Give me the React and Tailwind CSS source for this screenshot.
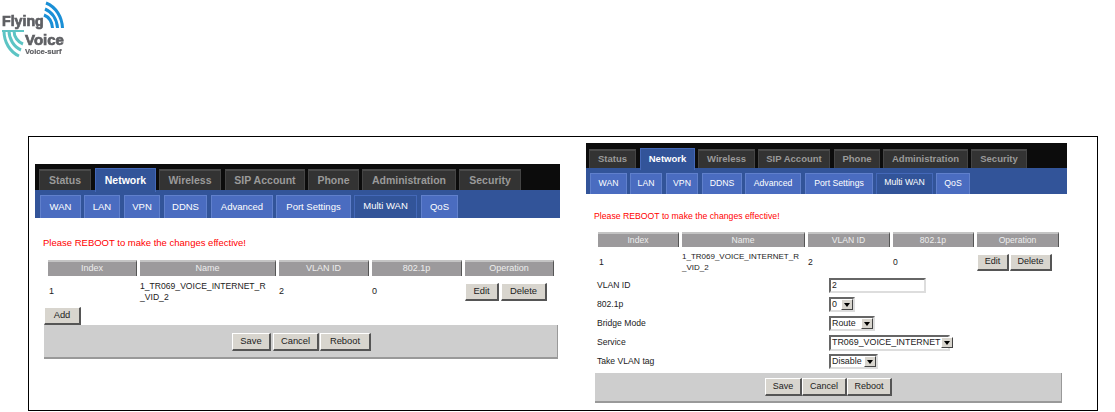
const font = "font-['Liberation_Sans',sans-serif]";

const leftPanel = {
  wrap: "w-[525px] ml-[6px] mt-[27px]",
  bar: "h-[26px] pt-[5px] pl-[4px]",
  tabText: "text-[10.5px]",
  tabH: "h-[21px]",
  activeH: "h-[24px] -mt-[1px]",
  sub: "h-[28px] pt-[5px] pl-[5px]",
  subText: "text-[9.5px]",
  tabs: [
    ["Status", "w-[52px]"],
    ["Network", "w-[61px] ml-[4px]", true],
    ["Wireless", "w-[62px] ml-[3px]"],
    ["SIP Account", "w-[80px] ml-[4px]"],
    ["Phone", "w-[51px] ml-[3px]"],
    ["Administration", "w-[94px] ml-[3px]"],
    ["Security", "w-[62px] ml-[3px]"],
  ],
  subs: [
    ["WAN", "w-[41px]"],
    ["LAN", "w-[36px] ml-[3px]"],
    ["VPN", "w-[36px] ml-[4px]"],
    ["DDNS", "w-[43px] ml-[4px]"],
    ["Advanced", "w-[62px] ml-[4px]"],
    ["Port Settings", "w-[75px] ml-[3px]"],
    ["Multi WAN", "w-[63px] ml-[3px]", true],
    ["QoS", "w-[37px] ml-[4px]"],
  ],
  msg: "ml-[8px] mt-[17px] h-[15px] text-[9.5px] leading-[15px]",
  head: "ml-[13px] mt-[10px] h-[16px] gap-[3px]",
  cols: ["w-[89px]", "w-[136px]", "w-[90px]", "w-[90px]", "w-[89px]"],
  row: "ml-[13px] h-[31px]",
  text: "text-[9px]",
  nameText: "text-[8.6px]",
  btnText: "text-[9.4px]",
  edit: "w-[34px] h-[18px]",
  del: "w-[46px] h-[18px] ml-[2px]",
  bar2: "w-[514px] h-[34px] ml-[9px] pl-[188px] pt-[8px]",
  save: "w-[39px] h-[18px]",
  cancel: "w-[46px] h-[18px] ml-[2px]",
  reboot: "w-[51px] h-[18px] ml-[1px]",
};

const rightPanel = {
  wrap: "w-[481px] ml-[26px] mt-[6px]",
  bar: "h-[25px] pt-[6px] pl-[3px]",
  tabText: "text-[9.5px]",
  tabH: "h-[19px]",
  activeH: "h-[22px] -mt-[1px]",
  sub: "h-[26px] pt-[5px] pl-[4px]",
  subText: "text-[8.7px]",
  tabs: [
    ["Status", "w-[47px]"],
    ["Network", "w-[55px] ml-[4px]", true],
    ["Wireless", "w-[57px] ml-[3px]"],
    ["SIP Account", "w-[72px] ml-[3px]"],
    ["Phone", "w-[46px] ml-[4px]"],
    ["Administration", "w-[85px] ml-[3px]"],
    ["Security", "w-[56px] ml-[3px]"],
  ],
  subs: [
    ["WAN", "w-[37px]"],
    ["LAN", "w-[32px] ml-[3px]"],
    ["VPN", "w-[32px] ml-[4px]"],
    ["DDNS", "w-[40px] ml-[4px]"],
    ["Advanced", "w-[56px] ml-[3px]"],
    ["Port Settings", "w-[68px] ml-[4px]"],
    ["Multi WAN", "w-[57px] ml-[3px]", true],
    ["QoS", "w-[34px] ml-[3px]"],
  ],
  msg: "ml-[8px] mt-[15px] h-[15px] text-[8.7px] leading-[15px]",
  head: "ml-[12px] mt-[8px] h-[15px] gap-[3px]",
  cols: ["w-[81px]", "w-[123px]", "w-[82px]", "w-[81px]", "w-[82px]"],
  row: "ml-[12px] h-[30px]",
  text: "text-[8.6px]",
  nameText: "text-[8px]",
  btnText: "text-[9px]",
  edit: "w-[32px] h-[17px]",
  del: "w-[42px] h-[17px] ml-[1px]",
  bar2: "w-[467px] h-[30px] ml-[9px] pl-[170px] pt-[5px]",
  save: "w-[37px] h-[18px]",
  cancel: "w-[45px] h-[18px]",
  reboot: "w-[45px] h-[18px]",
};

function Btn({ label, className, text }) {
  return (
    <div
      className={`flex items-center justify-center bg-[#d8d5ce] border-t border-l border-t-white border-l-white border-r-2 border-b-2 border-r-[#555] border-b-[#555] text-[#222] ${text} ${className}`}
    >
      {label}
    </div>
  );
}

function Select({ label, className }) {
  return (
    <div className={`flex items-center justify-between border-2 border-t-[#666] border-l-[#666] border-r-[#ddd] border-b-[#ddd] bg-white pl-[1px] ${className}`}>
      <span className="text-[8.9px] text-[#222] whitespace-nowrap">{label}</span>
      <span className="flex items-center justify-center w-[12px] h-[11px] shrink-0 bg-[#d8d5ce] border-t border-l border-t-white border-l-white border-r border-b border-r-[#444] border-b-[#444]">
        <span className="border-x-[3px] border-x-transparent border-t-[4px] border-t-black" />
      </span>
    </div>
  );
}

function Table({ p }) {
  const titles = ["Index", "Name", "VLAN ID", "802.1p", "Operation"];
  return (
    <>
      <div className={`flex ${p.head}`}>
        {titles.map((t, i) => (
          <div
            key={t}
            className={`${p.cols[i]} flex items-center justify-center bg-[#9c9a9c] border-t-2 border-t-[#c4c4c4] border-r border-r-[#555] text-[#eeeeee] ${p.text}`}
          >
            {t}
          </div>
        ))}
      </div>
      <div className={`flex items-center gap-[3px] text-[#222] ${p.text} ${p.row}`}>
        <div className={`${p.cols[0]} pl-[1px]`}>1</div>
        <div className={`${p.cols[1]} leading-[11px] whitespace-nowrap ${p.nameText}`}>1_TR069_VOICE_INTERNET_R<br />_VID_2</div>
        <div className={p.cols[2]}>2</div>
        <div className={p.cols[3]}>0</div>
        <div className={`${p.cols[4]} flex`}>
          <Btn label="Edit" className={p.edit} text={p.btnText} />
          <Btn label="Delete" className={p.del} text={p.btnText} />
        </div>
      </div>
    </>
  );
}

function ActionBar({ p }) {
  return (
    <div className={`flex bg-[#cecece] border-b-2 border-r border-b-[#999] border-r-[#999] ${p.bar2}`}>
      <Btn label="Save" className={p.save} text={p.btnText} />
      <Btn label="Cancel" className={p.cancel} text={p.btnText} />
      <Btn label="Reboot" className={p.reboot} text={p.btnText} />
    </div>
  );
}

function Nav({ p }) {
  return (
    <>
      <div className={`flex bg-[#0c0c0c] ${p.bar}`}>
        {p.tabs.map(([name, w, active]) => (
          <div
            key={name}
            className={`flex items-center justify-center font-bold whitespace-nowrap ${p.tabText} ${w} ${
              active
                ? `${p.activeH} relative z-10 bg-[#325499] border border-b-0 border-[#4468b8] text-white`
                : `${p.tabH} bg-[#333333] border-t-2 border-x border-t-[#4a4a4a] border-x-[#444] text-[#9a9a9a]`
            }`}
          >
            {name}
          </div>
        ))}
      </div>
      <div className={`flex bg-[#325499] ${p.sub}`}>
        {p.subs.map(([name, w, active]) => (
          <div
            key={name}
            className={`flex items-center justify-center whitespace-nowrap text-white ${p.subText} ${w} border border-b-0 ${
              active ? "bg-[#325499] border-[#4468b8] pb-[2px]" : "bg-[#4a6cc0] border-[#6080cc]"
            }`}
          >
            {name}
          </div>
        ))}
      </div>
    </>
  );
}

function LeftPanel() {
  const p = leftPanel;
  return (
    <div className={p.wrap}>
      <Nav p={p} />
      <div className={`text-[#ff0000] ${p.msg}`}>Please REBOOT to make the changes effective!</div>
      <Table p={p} />
      <Btn label="Add" className="w-[37px] h-[18px] ml-[9px]" text={p.btnText} />
      <ActionBar p={p} />
    </div>
  );
}

function RightPanel() {
  const p = rightPanel;
  const rows = [
    ["802.1p", <Select label="0" className="w-[26px] h-[15px]" />],
    ["Bridge Mode", <Select label="Route" className="w-[46px] h-[15px]" />],
    ["Service", <Select label="TR069_VOICE_INTERNET" className="w-[121px] h-[16px]" />],
    ["Take VLAN tag", <Select label="Disable" className="w-[49px] h-[15px]" />],
  ];
  return (
    <div className={p.wrap}>
      <Nav p={p} />
      <div className={`text-[#ff0000] ${p.msg}`}>Please REBOOT to make the changes effective!</div>
      <Table p={p} />
      <div className={`ml-[11px] mt-[1px] flex flex-col gap-[4px] text-[#222] ${p.text}`}>
        <div className="flex items-center h-[15px]">
          <div className="w-[232px]">VLAN ID</div>
          <div className="w-[97px] h-[15px] border-2 border-t-[#666] border-l-[#666] border-r-[#ddd] border-b-[#ddd] pl-[1px] leading-[11px]">2</div>
        </div>
        {rows.map(([label, control]) => (
          <div key={label} className="flex items-center h-[15px]">
            <div className="w-[232px]">{label}</div>
            {control}
          </div>
        ))}
      </div>
      <div className="mt-[4px]">
        <ActionBar p={p} />
      </div>
    </div>
  );
}

function Logo() {
  return (
    <svg width="66" height="58" viewBox="0 0 66 58" className="blur-[0.4px]">
      <g fill="none" stroke="#1a8fd6" strokeWidth="3">
        <path d="M46 3 C56 7 62 17 62.5 28" />
        <path d="M45 9 C52 12 57 19 57.5 28" />
        <path d="M44 15 C49 17 52 22 52.5 28" />
      </g>
      <g fill="none" stroke="#5cc4c4" strokeWidth="3">
        <path d="M2 31 H24" strokeWidth="2" />
        <path d="M4 31 C4 42 10 52 19 56" />
        <path d="M9 31 C9 39 14 47 21 50" />
        <path d="M14 31 C14 37 18 42 23 44" />
      </g>
      <g fontFamily="'Liberation Sans',sans-serif" fontWeight="700" fill="#5f6064" stroke="#5f6064">
        <text x="2" y="26" fontSize="14.2" strokeWidth="0.7">Flying</text>
        <text x="25" y="45" fontSize="15" strokeWidth="0.7">Voice</text>
        <text x="25" y="54" fontSize="7.6" strokeWidth="0.2">Voice-surf</text>
      </g>
    </svg>
  );
}

export default function App() {
  return (
    <div className={`w-[1115px] h-[412px] bg-white overflow-hidden ${font}`}>
      <div className="h-[136px]">
        <Logo />
      </div>
      <div className="ml-[28px] w-[1070px] h-[275px] border border-black flex items-start">
        <LeftPanel />
        <RightPanel />
      </div>
    </div>
  );
}
